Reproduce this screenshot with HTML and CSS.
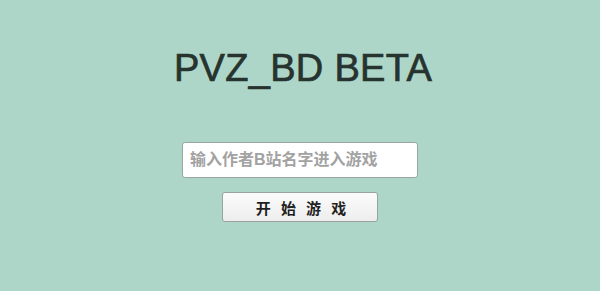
FILE: index.html
```html
<!DOCTYPE html>
<html lang="zh">
<head>
<meta charset="utf-8">
<title>PVZ_BD BETA</title>
<link rel="stylesheet" href="styles.css">
</head>
<body>
<main class="page">
  <h1 class="title">PVZ_BD BETA</h1>
  <form class="form">
    <input class="name-input" type="text" placeholder="输入作者B站名字进入游戏">
    <button class="start-btn" type="button">开 始 游 戏</button>
  </form>
</main>
</body>
</html>
```
FILE: styles.css
```css
html, body {
  margin: 0;
  padding: 0;
  height: 100%;
}
body {
  background: #aed6c8;
  font-family: "Liberation Sans", "Noto Sans CJK SC", sans-serif;
}
.page {
  display: flex;
  flex-direction: column;
  align-items: center;
  padding-top: 46px;
}
.title {
  margin: 0 0 0 6px;
  font-weight: 400;
  font-size: 38px;
  line-height: 44px;
  color: #26332e;
  letter-spacing: 0.3px;
  -webkit-text-stroke: 0.7px #26332e;
}
.form {
  display: flex;
  flex-direction: column;
  align-items: center;
  margin-top: 52px;
  gap: 14px;
}
.name-input {
  box-sizing: border-box;
  width: 236px;
  height: 36px;
  padding: 0 7px;
  border: 1px solid #9aa5a0;
  border-radius: 3px;
  background: #fff;
  font-family: "Liberation Sans", "Noto Sans CJK SC", sans-serif;
  font-size: 16px;
  color: #333;
  outline: none;
}
.name-input::placeholder {
  color: #a2a2a2;
  font-weight: 700;
}
.start-btn {
  box-sizing: border-box;
  width: 156px;
  height: 30px;
  border: 1px solid #9aa39f;
  border-radius: 3px;
  background: linear-gradient(#fbfbfb, #ededed);
  font-family: "Liberation Sans", "Noto Sans CJK SC", sans-serif;
  font-size: 15px;
  font-weight: 700;
  color: #1f1f1f;
  padding: 0 0 0 2px;
  word-spacing: 6px;
}
```
